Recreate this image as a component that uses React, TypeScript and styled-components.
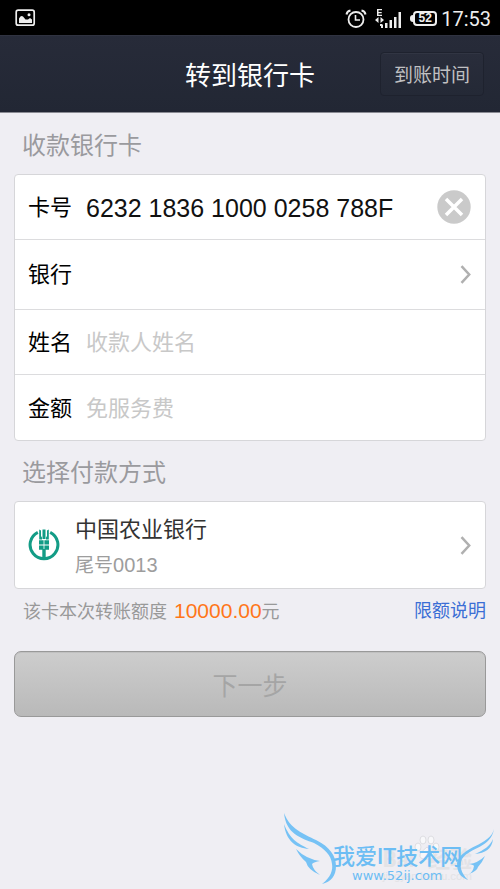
import React, { useState } from 'react';
import styled, { createGlobalStyle } from 'styled-components';

const GlobalStyle = createGlobalStyle`
  * { box-sizing: border-box; }
  body {
    margin: 0;
    background: #efeef3;
    font-family: Roboto, "Noto Sans CJK SC", sans-serif;
    color: #111;
  }
  button, input {
    font-family: inherit;
    padding: 0;
    border: 0;
    background: none;
    color: inherit;
  }
`;

const digitFont = '"Liberation Sans", "Noto Sans CJK SC", sans-serif';

const Page = styled.div`
  min-height: 100vh;
  display: flex;
  flex-direction: column;
`;

const StatusBar = styled.div`
  height: 35px;
  padding: 0 9px 0 15px;
  display: flex;
  align-items: center;
  justify-content: space-between;
  background: #000;
  color: #eee;
`;

const StatusGroup = styled.div`
  padding-top: 2px;
  display: flex;
  align-items: center;
  gap: 8px;
`;

const Battery = styled.div`
  display: flex;
  align-items: center;
  &::before {
    content: '';
    width: 3px;
    height: 7px;
    border-radius: 3px 0 0 3px;
    background: #eee;
  }
`;

const BatteryLevel = styled.span`
  width: 24px;
  height: 15px;
  border: 2px solid #eee;
  border-radius: 4px;
  font-family: ${digitFont};
  font-size: 12px;
  line-height: 11px;
  font-weight: 700;
  text-align: center;
`;

const Clock = styled.time`
  margin-left: -4px;
  font-size: 20px;
  line-height: 24px;
`;

const Header = styled.header`
  height: 78px;
  padding: 0 16px;
  display: grid;
  grid-template-columns: 1fr auto 1fr;
  align-items: center;
  background: linear-gradient(#272b39, #222734);
  border-bottom: 1px solid #8a8b93;
  box-shadow: inset 0 1px #303341;
`;

const Title = styled.h1`
  grid-column: 2;
  margin: 0;
  padding-top: 4px;
  font-size: 26px;
  line-height: 32px;
  font-weight: 400;
  color: #fff;
`;

const HeaderButton = styled.button`
  justify-self: end;
  width: 104px;
  height: 44px;
  padding-top: 4px;
  border: 1px solid #1e222e;
  border-radius: 4px;
  background: linear-gradient(#292d3b, #242936);
  box-shadow: inset 0 1px #313543;
  font-size: 19px;
  line-height: 24px;
  color: #c0c0c2;
`;

const Content = styled.main`
  padding: 15px 14px 0;
  display: flex;
  flex-direction: column;
`;

const SectionTitle = styled.h2`
  margin: 0;
  padding: 0 8px;
  font-size: 24px;
  line-height: 36px;
  font-weight: 400;
  color: #9a9a9e;
`;

const Card = styled.div`
  margin: 10px 0 14px;
  border: 1px solid #d6d6d9;
  border-radius: 4px;
  background: #fff;
`;

const rowBase = `
  width: 100%;
  padding: 0 14px 0 13px;
  display: flex;
  align-items: center;
  text-align: left;
`;

const FieldRow = styled.div`
  ${rowBase}
  height: 65px;
  &:not(:last-child) { border-bottom: 1px solid #dcdcde; }
`;

const PickerRow = styled.button`
  ${rowBase}
  height: 70px;
  justify-content: space-between;
  border-bottom: 1px solid #dcdcde;
  font-size: 22px;
  line-height: 32px;
  color: #000;
`;

const FieldLabel = styled.label`
  width: 58px;
  padding-top: 2px;
  font-size: 22px;
  line-height: 32px;
  color: #000;
`;

const FieldInput = styled.input<{ $large?: boolean }>`
  flex: 1;
  min-width: 0;
  height: 36px;
  padding-top: 2px;
  outline: none;
  font-family: ${digitFont};
  font-size: ${p => (p.$large ? 25 : 22)}px;
  color: #111;
  &::placeholder { color: #c8c8c8; opacity: 1; }
`;

const ClearButton = styled.button`
  display: flex;
`;

const AccountCard = styled.button`
  ${rowBase}
  height: 86px;
  gap: 15px;
`;

const AccountText = styled.span`
  flex: 1;
  padding-top: 2px;
  display: flex;
  flex-direction: column;
  gap: 4px;
`;

const BankName = styled.span`
  font-size: 22px;
  line-height: 34px;
  color: #333;
`;

const CardTail = styled.span`
  font-size: 19px;
  line-height: 28px;
  color: #9d9d9d;
`;

const TailDigits = styled.span`
  font-family: ${digitFont};
  font-size: 20px;
`;

const LimitRow = styled.div`
  margin-top: -6px;
  padding-left: 9px;
  display: flex;
  justify-content: space-between;
  font-size: 18px;
  line-height: 28px;
  color: #999;
`;

const Amount = styled.strong`
  margin-left: 7px;
  font-family: ${digitFont};
  font-size: 21px;
  font-weight: 400;
  color: #ff7619;
`;

const HelpLink = styled.a`
  color: #3b6ed5;
  text-decoration: none;
`;

const NextButton = styled.button`
  height: 66px;
  margin-top: 25px;
  border: 1px solid #999;
  border-radius: 7px;
  background: linear-gradient(#cdcdcd, #b9b9b9);
  box-shadow: inset 0 1px #c0c0c0;
  font-size: 25px;
  color: #a5a5a5;
`;

const Footer = styled.footer`
  position: relative;
  align-self: flex-end;
  width: 220px;
  height: 80px;
  margin-top: auto;
`;

const Wings = styled.svg`
  position: absolute;
  inset: 0;
`;

const FaintMark = styled.div`
  position: absolute;
  right: 28px;
  bottom: 6px;
  font-size: 22px;
  line-height: 22px;
  font-weight: 700;
  color: #e3e3e6;
  display: flex;
  flex-direction: column;
`;

const FaintName = styled.div`
  display: flex;
  justify-content: space-between;
`;

const FaintUrl = styled.div`
  font-size: 11px;
  line-height: 12px;
  font-weight: 400;
`;

const SiteMark = styled.div`
  position: absolute;
  left: 53px;
  bottom: 7px;
  color: #6cbdf4;
`;

const SiteName = styled.div`
  font-size: 22px;
  line-height: 26px;
  font-weight: 500;
`;

const SiteUrl = styled.div`
  padding-left: 19px;
  font-family: "DejaVu Sans", sans-serif;
  font-size: 13px;
  line-height: 12px;
`;

const PictureIcon = () => (
  <svg width="21" height="18" viewBox="0 0 21 18" aria-hidden="true">
    <rect x="1.2" y="1.2" width="18" height="15" rx="2" fill="none" stroke="#eee" strokeWidth="1.7" />
    <path d="M4 14V9.500Q6 6 8 7.500L10.500 10.500H13L15 9l2 1.500V14z" fill="#eee" />
    <circle cx="14" cy="5.700" r="1.500" fill="#eee" />
  </svg>
);

const AlarmIcon = () => (
  <svg width="22" height="20" viewBox="0 0 22 20" fill="none" stroke="#eee" aria-hidden="true">
    <circle cx="11" cy="10.500" r="7.500" strokeWidth="1.800" />
    <path d="M10.500 6v5H15" strokeWidth="1.600" />
    <path d="M1.500 5.500Q2 2 5.500 1.500M20.500 5.500Q20 2 16.500 1.500" strokeWidth="2" />
  </svg>
);

const SignalIcon = () => (
  <svg width="27" height="20" viewBox="0 0 27 20" fill="#eee" aria-hidden="true">
    <path d="M2 0h5v1.300H3.500v1.600h3.200v1.300H3.500v1.600H7V7H2z" />
    <path d="M0 11l3.500-3v6zM9 11L5.500 8v6zM5 15h2.500v2H5z" />
    <path d="M6 16h2v3H6zM10 14h2.500v5H10zM14.500 11h2.500v8h-2.500zM19 8h2.500v11H19zM23.500 3H26v16h-2.500z" />
  </svg>
);

const Chevron = () => (
  <svg width="11" height="19" viewBox="0 0 11 19" fill="none" stroke="#b0b0b0" strokeWidth="2.500" aria-hidden="true">
    <path d="M1.500 1.200L9.200 9.500l-7.700 8.300" />
  </svg>
);

const ClearIcon = () => (
  <svg width="34" height="34" viewBox="0 0 34 34" aria-hidden="true">
    <circle cx="17" cy="17" r="16.700" fill="#cacaca" />
    <path d="M9 9l16 16M25 9L9 25" stroke="#fff" strokeWidth="3.500" />
  </svg>
);

const BankLogo = () => (
  <svg width="32" height="32" viewBox="0 0 32 32" aria-hidden="true">
    <path d="M9.800 3.300A13.900 13.900 0 1 0 22.200 3.300" fill="none" stroke="#139c86" strokeWidth="3" />
    <path d="M14.500 0.500h3v9.500h-3zM11.200 0.500l1.800 1v5.500l1 1.500V10.500h-2.800zM20.800 0.500l-1.800 1v5.500l-1 1.500V10.500h2.800zM11 11.200h4.600v4.400H11zM16.400 11.200H21v4.400h-4.600zM11 16.400h4.600v4.400H11zM16.400 16.400H21v4.400h-4.600zM14.300 20h3.400v10h-3.400z" fill="#139c86" />
  </svg>
);

const WingsDrawing = () => (
  <Wings width="220" height="80" viewBox="280 809 220 80" aria-hidden="true">
    <g fill="#76c2f5">
      <path d="M284 813C290 829 304 834 316 840C330 847 336 856 336 866C336 876 331 882 322 884C331 877 333 870 332 864C331 855 325 849 314 843C301 838 286 834 284 813Z" />
      <path d="M284 824C290 839 297 843 309 849C296 848 286 841 284 824Z" />
      <path d="M296 849Q306 859 320 861Q314 862 312 864Q313 870 320 875Q308 870 306 862Q300 857 296 849Z" />
      <path d="M494 829C490 846 461 846 457 863C457 872 460 877 468 880C461 873 459 866 462 859C470 847 491 848 494 829Z" />
      <path d="M493 839C490 846 484 850 475 854C485 853 492 849 493 839Z" />
      <path d="M485 856Q478 863 469 864Q474 865 474 866Q473 872 469 874Q477 871 478 867Q482 863 485 856Z" />
    </g>
    <g fill="#f8f8fa" stroke="#dedee2">
      <ellipse cx="418" cy="847" rx="3" ry="4" />
      <ellipse cx="423" cy="840" rx="3" ry="4" />
      <ellipse cx="431" cy="840" rx="3" ry="4" />
      <ellipse cx="436" cy="847" rx="3" ry="4" />
      <path d="M427 847Q431 850 434 854Q435 860 427 859Q419 860 420 854Q423 850 427 847Z" />
    </g>
  </Wings>
);

export default function App() {
  const [card, setCard] = useState('6232 1836 1000 0258 788F');
  return (
    <Page>
      <GlobalStyle />
      <StatusBar>
        <PictureIcon />
        <StatusGroup>
          <AlarmIcon />
          <SignalIcon />
          <Battery><BatteryLevel>52</BatteryLevel></Battery>
          <Clock>17:53</Clock>
        </StatusGroup>
      </StatusBar>
      <Header>
        <Title>转到银行卡</Title>
        <HeaderButton type="button">到账时间</HeaderButton>
      </Header>
      <Content>
        <SectionTitle>收款银行卡</SectionTitle>
        <Card>
          <FieldRow>
            <FieldLabel htmlFor="card">卡号</FieldLabel>
            <FieldInput id="card" $large value={card} onChange={e => setCard(e.target.value)} />
            <ClearButton type="button" aria-label="清除" onClick={() => setCard('')}><ClearIcon /></ClearButton>
          </FieldRow>
          <PickerRow type="button">银行<Chevron /></PickerRow>
          <FieldRow>
            <FieldLabel htmlFor="name">姓名</FieldLabel>
            <FieldInput id="name" placeholder="收款人姓名" />
          </FieldRow>
          <FieldRow>
            <FieldLabel htmlFor="amount">金额</FieldLabel>
            <FieldInput id="amount" placeholder="免服务费" />
          </FieldRow>
        </Card>
        <SectionTitle>选择付款方式</SectionTitle>
        <Card>
          <AccountCard type="button">
            <BankLogo />
            <AccountText>
              <BankName>中国农业银行</BankName>
              <CardTail>尾号<TailDigits>0013</TailDigits></CardTail>
            </AccountText>
            <Chevron />
          </AccountCard>
        </Card>
        <LimitRow>
          <span>该卡本次转账额度<Amount>10000.00</Amount>元</span>
          <HelpLink href="#limits">限额说明</HelpLink>
        </LimitRow>
        <NextButton type="button" disabled>下一步</NextButton>
      </Content>
      <Footer>
        <FaintMark>
          <FaintName><span>Bai</span><span>经验</span></FaintName>
          <FaintUrl>jingyan.baidu.com</FaintUrl>
        </FaintMark>
        <WingsDrawing />
        <SiteMark>
          <SiteName>我爱IT技术网</SiteName>
          <SiteUrl>www.52ij.com</SiteUrl>
        </SiteMark>
      </Footer>
    </Page>
  );
}
